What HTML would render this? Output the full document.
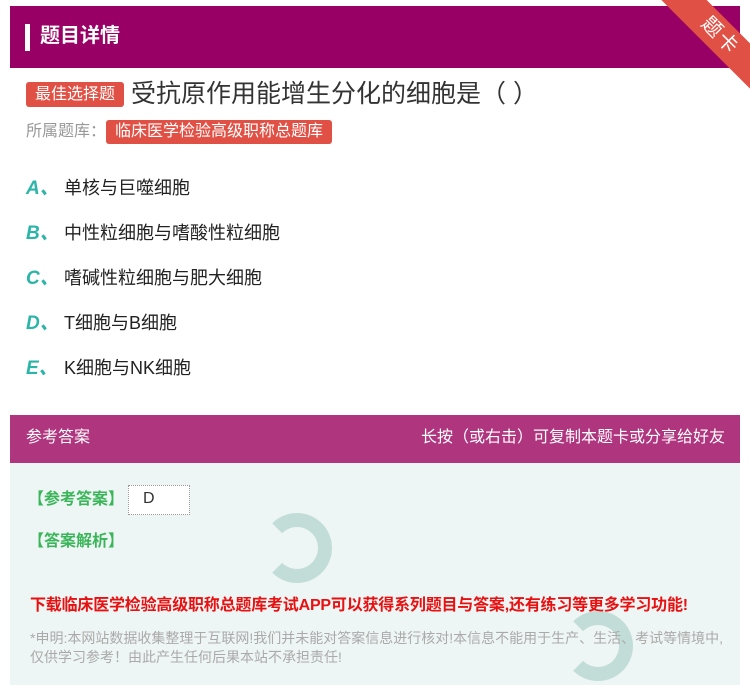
<!DOCTYPE html>
<html><head><meta charset="utf-8"><style>
body{margin:0;width:750px;height:685px;background:#fff;font-family:"Liberation Sans","Noto Sans CJK SC",sans-serif;position:relative;overflow:hidden}
.hd{position:absolute;left:10px;top:6px;width:730px;height:62px;background:#990066}
.hd .bar{position:absolute;left:15px;top:18px;width:5px;height:27px;background:#fff}
.hd .t{position:absolute;left:30px;top:14px;color:#fff;font-size:20px;font-weight:bold;line-height:32px}
.rib{position:absolute;left:640px;top:20px;width:160px;height:32px;background:#e05045;transform:rotate(45deg);color:#fff;font-size:20px;text-align:center;line-height:32px;letter-spacing:2px}
.q{position:absolute;left:26px;top:78px;font-size:25px;color:#333;line-height:32px;white-space:nowrap}
.tag{display:inline-block;background:#e05045;color:#fff;font-size:16px;line-height:25px;padding:0 9px;border-radius:3px;vertical-align:3px;margin-right:7px}
.lib{position:absolute;left:26px;top:120px;font-size:16px;color:#999;line-height:24px}
.lib span{background:#e05045;color:#fff;padding:0 9px;border-radius:3px;display:inline-block}
.op{position:absolute;left:26px;font-size:18px;color:#222;line-height:24px}
.op b{color:#2bb5a8;font-style:italic;font-size:19px;display:inline-block;width:38px}
.ah{position:absolute;left:10px;top:415px;width:730px;height:48px;background:#b0357f;color:#fff;font-size:16px;line-height:46px}
.ab{position:absolute;left:10px;top:463px;width:730px;height:222px;background:#eef6f5}
.g{color:#3bb55a;font-size:16px;font-weight:bold;position:absolute;left:18px}
.red{position:absolute;left:20px;top:128px;color:#e81010;font-size:16px;font-weight:bold;letter-spacing:-0.2px;white-space:nowrap}
.dec{position:absolute;left:20px;top:166px;width:700px;color:#aaa;font-size:14px;line-height:19px}
.logo{position:absolute;width:70px;height:70px;border-radius:50%;border:14px solid #b8d8d2;box-sizing:border-box;border-left-color:transparent;opacity:.8}
</style></head><body>
<div class="hd"><div class="bar"></div><div class="t">题目详情</div></div>
<div class="rib">题卡</div>
<div class="q"><span class="tag">最佳选择题</span>受抗原作用能增生分化的细胞是（ ）</div>
<div class="lib">所属题库：<span>临床医学检验高级职称总题库</span></div>
<div class="op" style="top:176px"><b>A、</b>单核与巨噬细胞</div>
<div class="op" style="top:221px"><b>B、</b>中性粒细胞与嗜酸性粒细胞</div>
<div class="op" style="top:266px"><b>C、</b>嗜碱性粒细胞与肥大细胞</div>
<div class="op" style="top:311px"><b>D、</b>T细胞与B细胞</div>
<div class="op" style="top:356px"><b>E、</b>K细胞与NK细胞</div>
<div class="ah"><span style="position:absolute;left:16px">参考答案</span><span style="position:absolute;right:15px">长按（或右击）可复制本题卡或分享给好友</span></div>
<div class="ab">
<div class="logo" style="left:252px;top:50px"></div>
<div class="logo" style="left:553px;top:148px"></div>
<div class="g" style="top:22px">【参考答案】<span style="display:inline-block;background:#fff;color:#333;font-weight:normal;width:62px;height:30px;line-height:26px;padding-left:14px;box-sizing:border-box;vertical-align:middle;margin-left:4px;border:1px dotted #999">D</span></div>
<div class="g" style="top:64px">【答案解析】</div>
<div class="red">下载临床医学检验高级职称总题库考试APP可以获得系列题目与答案,还有练习等更多学习功能!</div>
<div class="dec">*申明:本网站数据收集整理于互联网!我们并未能对答案信息进行核对!本信息不能用于生产、生活、考试等情境中,仅供学习参考！由此产生任何后果本站不承担责任!</div>
</div>
</body></html>
